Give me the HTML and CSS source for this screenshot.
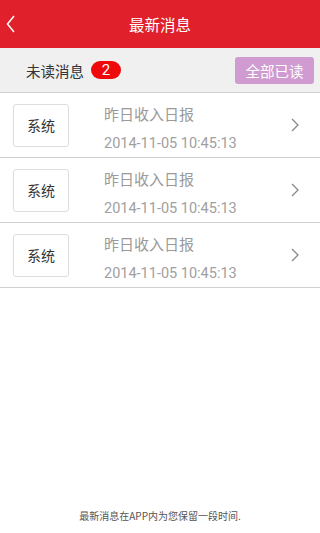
FILE: index.html
```html
<!DOCTYPE html>
<html lang="zh-CN">
<head>
    <meta charset="UTF-8">
    <meta name="viewport" content="width=device-width, initial-scale=1.0">
    <title>最新消息</title>
    <link rel="stylesheet" href="styles.css">
</head>
<body>

<div class="page">
    <div class="header">
        <svg class="back" width="10" height="18" viewBox="0 0 10 18">
            <polyline points="8,1 1.5,9 8,17" fill="none" stroke="#fff" stroke-width="1.5"/>
        </svg>
        <h1>最新消息</h1>
    </div>

    <div class="unread-bar">
        <span class="unread-label">未读消息</span>
        <span class="badge">2</span>
        <button class="read-all">全部已读</button>
    </div>

    <ul class="msg-list">
        <li class="msg">
            <div class="tag">系统</div>
            <div class="msg-body">
                <div class="msg-title">昨日收入日报</div>
                <div class="msg-time">2014-11-05 10:45:13</div>
            </div>
            <svg class="arrow" width="8" height="14" viewBox="0 0 8 14">
                <polyline points="1,1 7,7 1,13" fill="none" stroke="#888" stroke-width="1.3"/>
            </svg>
        </li>
        <li class="msg">
            <div class="tag">系统</div>
            <div class="msg-body">
                <div class="msg-title">昨日收入日报</div>
                <div class="msg-time">2014-11-05 10:45:13</div>
            </div>
            <svg class="arrow" width="8" height="14" viewBox="0 0 8 14">
                <polyline points="1,1 7,7 1,13" fill="none" stroke="#888" stroke-width="1.3"/>
            </svg>
        </li>
        <li class="msg">
            <div class="tag">系统</div>
            <div class="msg-body">
                <div class="msg-title">昨日收入日报</div>
                <div class="msg-time">2014-11-05 10:45:13</div>
            </div>
            <svg class="arrow" width="8" height="14" viewBox="0 0 8 14">
                <polyline points="1,1 7,7 1,13" fill="none" stroke="#888" stroke-width="1.3"/>
            </svg>
        </li>
    </ul>

    <p class="footer-note">最新消息在APP内为您保留一段时间.</p>
</div>

</body>
</html>
```

FILE: styles.css
```css
body {
    margin: 0;
    padding: 0;
    background: #fff;
    font-family: "Noto Sans CJK SC", "Roboto", sans-serif;
}

.page {
    height: 533px;
    display: flex;
    flex-direction: column;
}

.header {
    position: relative;
    height: 48px;
    background: #e0202a;
    display: flex;
    align-items: center;
    justify-content: center;
}

.header h1 {
    margin: 0;
    font-size: 15.5px;
    font-weight: normal;
    color: #fff;
}

.back {
    position: absolute;
    left: 6px;
    top: 15px;
}

.unread-bar {
    height: 44px;
    background: #f0f0f0;
    border-bottom: 1px solid #cfcfcf;
    display: flex;
    align-items: center;
    padding: 0 6px 0 26px;
}

.unread-label {
    font-size: 14.5px;
    color: #333;
}

.badge {
    margin-left: 7px;
    width: 30px;
    height: 18px;
    line-height: 18px;
    border-radius: 9px;
    background: #ee0a0a;
    color: #fff;
    text-align: center;
    font-family: "Roboto", sans-serif;
    font-size: 15px;
}

.read-all {
    margin-left: auto;
    width: 79px;
    height: 27px;
    border: none;
    border-radius: 3px;
    background: #cf9bd1;
    color: #fff;
    font-family: inherit;
    font-size: 14.5px;
    padding: 0;
}

.msg-list {
    list-style: none;
    margin: 0;
    padding: 0;
}

.msg {
    height: 64px;
    border-bottom: 1px solid #cfcfcf;
    display: flex;
    align-items: center;
    padding: 0 21px 0 13px;
}

.tag {
    width: 56px;
    height: 43px;
    box-sizing: border-box;
    border: 1px solid #ddd;
    border-radius: 3px;
    display: flex;
    align-items: center;
    justify-content: center;
    font-size: 14px;
    color: #333;
}

.msg-body {
    align-self: flex-start;
    padding-top: 11px;
    margin-left: 35px;
    flex: 1;
    color: #9a9a9a;
}

.msg-title {
    font-size: 15px;
    line-height: 20px;
}

.msg-time {
    margin-top: 10px;
    font-family: "Roboto", sans-serif;
    font-size: 14.5px;
    line-height: 20px;
    color: #a0a0a0;
}

.footer-note {
    margin: auto 0 10px;
    text-align: center;
    font-size: 10px;
    color: #555;
}
```
